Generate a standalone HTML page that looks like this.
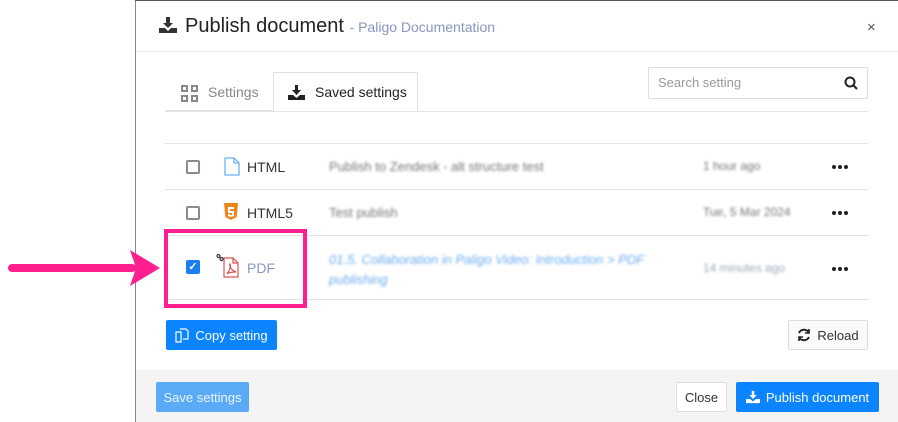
<!DOCTYPE html>
<html><head><meta charset="utf-8"><style>
*{box-sizing:border-box;margin:0;padding:0}
body{width:898px;height:422px;overflow:hidden;background:#fff;font-family:"Liberation Sans",sans-serif;position:relative;color:#333}
.a{position:absolute}
.blur{filter:blur(1.2px);color:#777;font-size:13px}
.btn{position:absolute;border-radius:2px;font-size:13px;display:flex;align-items:center;justify-content:center;gap:6px}
.cb{position:absolute;width:14px;height:14px;border:2px solid #8a8a96;border-radius:2px}
.dots{position:absolute;width:16px;height:4px;display:flex;justify-content:space-between}
.dots i{display:block;width:4px;height:4px;border-radius:50%;background:#222}
</style></head><body>
<div class="a" style="left:135px;top:0;width:1px;height:422px;background:#888"></div>
<div class="a" style="left:135px;top:0;width:763px;height:1px;background:#555"></div>
<!-- header -->
<svg class="a" style="left:159px;top:17px" width="18" height="16" viewBox="0 0 18 16"><path d="M7 0h4v6h3l-5 5-5-5h3z" fill="#333"/><path d="M0 11h6l3 3 3-3h6v5H0z" fill="#333"/></svg>
<div class="a" style="left:185px;top:15px;font-size:20px;color:#222">Publish document <span style="font-size:14px;color:#8a96c0">- Paligo Documentation</span></div>
<div class="a" style="left:867px;top:19px;font-size:15px;color:#555">×</div>
<div class="a" style="left:136px;top:51px;width:762px;height:1px;background:#e8e8e8"></div>
<!-- tabs -->
<svg class="a" style="left:181px;top:85px" width="17" height="17" viewBox="0 0 17 17" fill="none" stroke="#888" stroke-width="2"><rect x="1" y="1" width="5" height="5"/><rect x="11" y="1" width="5" height="5"/><rect x="1" y="11" width="5" height="5"/><rect x="11" y="11" width="5" height="5"/></svg>
<div class="a" style="left:208px;top:84px;font-size:14px;color:#888">Settings</div>
<div class="a" style="left:273px;top:72px;width:145px;height:40px;border:1px solid #e0e0e0;border-bottom:none;background:#fff"></div>
<svg class="a" style="left:288px;top:85px" width="17" height="15" viewBox="0 0 17 15"><path d="M7 0h3v5h3l-4.5 5L4 5h3z" fill="#222"/><path d="M0 10h5l3.5 3 3.5-3h5v5H0z" fill="#222"/></svg>
<div class="a" style="left:315px;top:84px;font-size:14px;color:#222">Saved settings</div>
<div class="a" style="left:165px;top:110px;width:108px;height:1px;background:#e0e0e0"></div>
<div class="a" style="left:648px;top:67px;width:220px;height:32px;border:1px solid #ddd;border-radius:2px"></div>
<div class="a" style="left:658px;top:75px;font-size:13px;color:#999">Search setting</div>
<svg class="a" style="left:844px;top:76px" width="14" height="14" viewBox="0 0 14 14" fill="none" stroke="#222" stroke-width="2"><circle cx="6" cy="6" r="4.5"/><path d="M9.5 9.5l3.5 3.5"/></svg>
<!-- table -->
<div class="a" style="left:165px;top:111px;width:703px;height:1px;background:#e4e4e4"></div>
<div class="a" style="left:165px;top:143px;width:703px;height:1px;background:#e4e4e4"></div>
<div class="a" style="left:165px;top:189px;width:703px;height:1px;background:#e4e4e4"></div>
<div class="a" style="left:165px;top:235px;width:703px;height:1px;background:#e4e4e4"></div>
<div class="a" style="left:165px;top:299px;width:703px;height:1px;background:#e4e4e4"></div>
<div class="cb" style="left:186px;top:160px"></div>
<svg class="a" style="left:224px;top:157px" width="16" height="19" viewBox="0 0 16 19" fill="none" stroke="#6ab4f0" stroke-width="1.3"><path d="M1 1h9l5 5v12H1z M10 1v5h5"/></svg>
<div class="a" style="left:247px;top:159px;font-size:14px;color:#333">HTML</div>
<div class="a blur" style="left:329px;top:159px">Publish to Zendesk - alt structure test</div>
<div class="a blur" style="left:703px;top:159px;font-size:12px">1 hour ago</div>
<div class="dots" style="left:832px;top:165px"><i></i><i></i><i></i></div>
<div class="cb" style="left:186px;top:206px"></div>
<svg class="a" style="left:224px;top:203px" width="14" height="17" viewBox="0 0 14 17"><path d="M0 0h14l-1.3 14L7 17l-5.7-3z" fill="#f0841c"/><path d="M4 4h6v2H6v2h4v5l-3 1-3-1v-2h2v1l1 .3 1-.3V10H4z" fill="#fff"/></svg>
<div class="a" style="left:247px;top:205px;font-size:14px;color:#333">HTML5</div>
<div class="a blur" style="left:329px;top:205px">Test publish</div>
<div class="a blur" style="left:703px;top:205px;font-size:12px">Tue, 5 Mar 2024</div>
<div class="dots" style="left:832px;top:211px"><i></i><i></i><i></i></div>
<div class="a" style="left:186px;top:260px;width:14px;height:14px;background:#1a7ff0;border-radius:2px;color:#fff;font-size:11px;line-height:14px;text-align:center;font-weight:bold">✓</div>
<svg class="a" style="left:216px;top:254px" width="25" height="24" viewBox="0 0 25 24" fill="none" stroke="#d9534f" stroke-width="1.2"><path d="M8 4h9l5 5v14H8z M17 4v5h5"/><path d="M11 20c3-4 4-8 3-10-1 2 1 6 6 8-3 0-7 0-9 2z"/><circle cx="2.5" cy="2" r="1.5" stroke="#333"/><circle cx="5.5" cy="5" r="1.5" stroke="#333"/></svg>
<div class="a" style="left:247px;top:260px;font-size:14px;color:#8a96c0">PDF</div>
<div class="a blur" style="left:329px;top:250px;color:#6aacf0;font-style:italic;line-height:20px;width:360px">01.5. Collaboration in Paligo Video: Introduction &gt; PDF publishing</div>
<div class="a blur" style="left:703px;top:261px;font-size:12px;color:#9ab">14 minutes ago</div>
<div class="dots" style="left:832px;top:267px"><i></i><i></i><i></i></div>
<!-- pink -->
<div class="a" style="left:164px;top:229px;width:143px;height:79px;border:4px solid #ff1f8e"></div>
<div class="a" style="left:8px;top:264px;width:128px;height:8px;background:#ff1f8e;border-radius:4px"></div>
<svg class="a" style="left:128px;top:250px" width="32" height="36" viewBox="0 0 32 36"><path d="M2 0l30 18L2 36l6-18z" fill="#ff1f8e"/></svg>
<!-- buttons -->
<div class="btn" style="left:166px;top:320px;width:111px;height:30px;background:#0a84ff;color:#fff">
<svg width="14" height="15" viewBox="0 0 14 15" fill="none" stroke="#fff" stroke-width="1.2"><path d="M1 4h5v10H1z M5 1h6l2 2v8H8"/></svg>Copy setting</div>
<div class="btn" style="left:788px;top:320px;width:80px;height:30px;border:1px solid #ddd;background:#fafafa;color:#333">
<svg width="14" height="14" viewBox="0 0 14 14" fill="none" stroke="#222" stroke-width="2"><path d="M12 5A5.5 5.5 0 0 0 2 5M2 9a5.5 5.5 0 0 0 10 0"/><path d="M12 1v4H8M2 13V9h4" stroke-width="1.6"/></svg>Reload</div>
<div class="a" style="left:136px;top:370px;width:762px;height:52px;background:#f4f4f4"></div>
<div class="btn" style="left:156px;top:382px;width:93px;height:30px;background:#5aaaf8;color:#eaf4ff">Save settings</div>
<div class="btn" style="left:676px;top:382px;width:51px;height:30px;background:#fff;border:1px solid #ddd;color:#333">Close</div>
<div class="btn" style="left:736px;top:382px;width:143px;height:30px;background:#0a84ff;color:#fff">
<svg width="14" height="14" viewBox="0 0 17 15"><path d="M7 0h3v5h3l-4.5 5L4 5h3z" fill="#fff"/><path d="M0 10h5l3.5 3 3.5-3h5v5H0z" fill="#fff"/></svg>Publish document</div>
</body></html>
